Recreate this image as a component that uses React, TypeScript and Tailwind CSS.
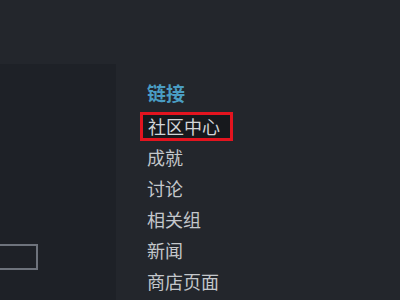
const links = ["成就", "讨论", "相关组", "新闻", "商店页面"];

export default function App() {
    return (
        <div
            className="flex h-[300px] w-[400px] overflow-hidden bg-[#23262c]"
            style={{ fontFamily: '"Noto Sans CJK SC", "Noto Sans", sans-serif' }}
        >
            {/* left panel */}
            <div className="mt-[64px] flex w-[116px] flex-col bg-[#1e2127]">
                <div className="mt-[180px] h-[26px] w-[38px] border-2 border-l-0 border-[#6e737c]" />
            </div>

            {/* links column */}
            <div className="flex flex-col pl-[31px] pt-[77px]">
                <h4 className="text-[19px] font-bold leading-[31px] text-[#4a9dc3]">链接</h4>
                <div className="-ml-[7px] mt-[4px] flex h-[29px] w-[93px] items-center border-[3px] border-[#e3141f] bg-[#17191d] pl-[5px]">
                    <span className="text-[18px] leading-[23px] text-[#d2d5d8]">社区中心</span>
                </div>
                <ul className="mt-[1px] flex flex-col">
                    {links.map((link) => (
                        <li key={link} className="text-[18px] leading-[31px] text-[#c4c7cb]">
                            {link}
                        </li>
                    ))}
                </ul>
            </div>
        </div>
    );
}
